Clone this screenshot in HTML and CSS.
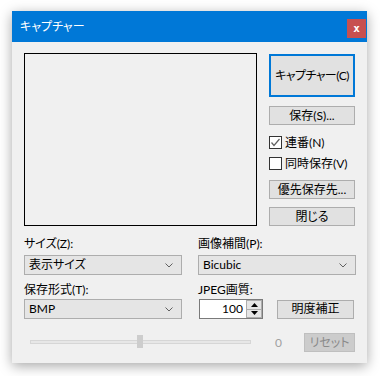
FILE: index.html
```html
<!DOCTYPE html>
<html lang="ja">
<head>
<meta charset="utf-8">
<link rel="stylesheet" href="styles.css">
</head>
<body>
<div class="window">
  <div class="titlebar">
    <span class="title">キャプチャー</span>
    <span class="close">x</span>
  </div>
  <div class="content">
    <div class="top">
      <div class="preview"></div>
      <div class="side">
        <div class="btn capture">キャプチャー(C)</div>
        <div class="btn save">保存(S)...</div>
        <div class="check first"><span class="box"><svg width="11" height="11" viewBox="0 0 11 11"><polyline points="1.5,5.5 4,8.5 9.5,2" fill="none" stroke="#606060" stroke-width="1.2"/></svg></span>連番(N)</div>
        <div class="check second"><span class="box"></span>同時保存(V)</div>
        <div class="btn pref">優先保存先...</div>
        <div class="btn closebtn">閉じる</div>
      </div>
    </div>
    <div class="fields">
      <div class="field">
        <div class="label">サイズ(Z):</div>
        <div class="combo"><span>表示サイズ</span><svg width="8" height="5" viewBox="0 0 8 5"><polyline points="0.5,0.5 4,4 7.5,0.5" fill="none" stroke="#606060" stroke-width="1"/></svg></div>
      </div>
      <div class="field">
        <div class="label">画像補間(P):</div>
        <div class="combo"><span>Bicubic</span><svg width="8" height="5" viewBox="0 0 8 5"><polyline points="0.5,0.5 4,4 7.5,0.5" fill="none" stroke="#606060" stroke-width="1"/></svg></div>
      </div>
      <div class="field">
        <div class="label l2">保存形式(T):</div>
        <div class="combo c2"><span>BMP</span><svg width="8" height="5" viewBox="0 0 8 5"><polyline points="0.5,0.5 4,4 7.5,0.5" fill="none" stroke="#606060" stroke-width="1"/></svg></div>
      </div>
      <div class="field">
        <div class="label l2">JPEG画質:</div>
        <div class="jpegrow">
          <div class="spin">
            <span class="val">100</span>
            <div class="arrows">
              <span class="arr"><svg width="7" height="4" viewBox="0 0 7 4"><polygon points="0,4 7,4 3.5,0" fill="#000"/></svg></span>
              <span class="arr"><svg width="7" height="4" viewBox="0 0 7 4"><polygon points="0,0 7,0 3.5,4" fill="#000"/></svg></span>
            </div>
          </div>
          <div class="btn bright">明度補正</div>
        </div>
      </div>
    </div>
    <div class="sliderrow">
      <div class="slider"><div class="track"></div><div class="thumb"></div></div>
      <span class="zero">0</span>
      <div class="btn reset">リセット</div>
    </div>
  </div>
</div>
</body>
</html>
```
FILE: styles.css
```css
* { box-sizing: border-box; }
html, body { margin: 0; padding: 0; background: #fff; }
body {
  width: 380px; height: 376px; overflow: hidden;
  font-family: Lato, "Noto Sans CJK JP", sans-serif;
  font-size: 12px;
  font-feature-settings: "palt";
  color: #000;
}
.window {
  margin: 11px 0 0 12px;
  width: 355px; height: 352px;
  background: #f0f0f0;
  box-shadow: 0 3px 12px rgba(0,0,0,0.35);
  display: flex; flex-direction: column;
}
.titlebar {
  height: 31px; background: #0078d7;
  display: flex; align-items: flex-start;
  padding: 0 1px 0 8px;
}
.title { color: #fff; font-size: 12px; line-height: 31px; flex: 1; }
.close {
  margin-top: 8px; width: 19px; height: 19px;
  background: #c75050; color: #fff;
  font-family: "DejaVu Sans Mono", monospace; font-weight: bold; font-size: 11px;
  display: flex; align-items: center; justify-content: center;
  line-height: 1;
}
.content { padding: 11px 12px 0 12px; }
.top { display: flex; }
.preview { width: 233px; height: 173px; border: 1px solid #000; }
.side { margin-left: 12px; width: 86px; display: flex; flex-direction: column; }
.btn {
  background: #e1e1e1; border: 1px solid #adadad;
  display: flex; align-items: center; justify-content: center;
  height: 19px; line-height: 1; white-space: nowrap;
}
.capture { margin-top: 1px; height: 43px; border: 2px solid #0078d7; letter-spacing: -0.6px; }
.save { margin-top: 9px; }
.check { display: flex; align-items: center; height: 13px; white-space: nowrap; line-height: 1; }
.check.first { margin-top: 11px; }
.check.second { margin-top: 8px; }
.box {
  width: 13px; height: 13px; border: 1px solid #333; background: #fff;
  margin-right: 3px; display: flex; align-items: center; justify-content: center;
}
.pref { margin-top: 10px; }
.closebtn { margin-top: 8px; }
.fields { display: grid; grid-template-columns: 158px 158px; column-gap: 16px; }
.label { margin-top: 10px; line-height: 16px; height: 16px; }
.label.l2 { margin-top: 7px; }
.combo {
  margin-top: 3px; height: 20px;
  background: #e5e5e5; border: 1px solid #adadad;
  display: flex; align-items: center; justify-content: space-between;
  padding: 0 8px 0 4px; line-height: 1;
}
.combo.c2 { margin-top: 1px; }
.jpegrow { margin-top: 1px; display: flex; align-items: center; }
.spin {
  margin-left: 1px; width: 64px; height: 20px;
  background: #fff; border: 1px solid #7a7a7a;
  display: flex; align-items: stretch;
}
.val { flex: 1; text-align: right; padding-right: 3px; line-height: 18px; }
.arrows { width: 16px; display: flex; flex-direction: column; }
.arr {
  flex: 1; background: #e5e5e5; border: 1px solid #adadad;
  display: flex; align-items: center; justify-content: center;
}
.arr + .arr { border-top: none; }
.bright { margin-left: 14px; width: 77px; height: 19px; }
.sliderrow { margin-top: 14px; height: 19px; display: flex; align-items: center; }
.slider { position: relative; margin-left: 6px; width: 221px; height: 19px; }
.track {
  position: absolute; left: 0; right: 0; top: 7px; height: 4px;
  background: #e7e7e7; border: 1px solid #d6d6d6;
}
.thumb {
  position: absolute; left: 107px; top: 2px; width: 6px; height: 13px;
  background: #cdcdcd;
}
.zero { margin-left: 24px; color: #a0a0a0; width: 29px; }
.reset {
  width: 51px; background: #cccccc; border-color: #bfbfbf; color: #8a8a8a;
}
```
